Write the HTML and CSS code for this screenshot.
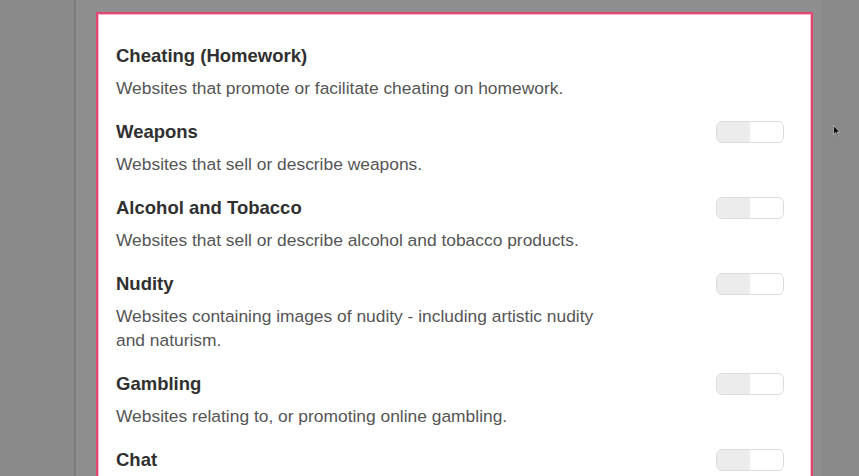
FILE: index.html
```html
<!DOCTYPE html>
<html>
<head>
<meta charset="utf-8">
<link rel="stylesheet" href="styles.css">
</head>
<body>
<div class="page">
  <div class="card">
    <div class="item">
      <div class="head"><span class="title">Cheating (Homework)</span></div>
      <p class="desc">Websites that promote or facilitate cheating on homework.</p>
    </div>
    <div class="item">
      <div class="head"><span class="title">Weapons</span><span class="toggle"><span class="knob"></span></span></div>
      <p class="desc">Websites that sell or describe weapons.</p>
    </div>
    <div class="item">
      <div class="head"><span class="title">Alcohol and Tobacco</span><span class="toggle"><span class="knob"></span></span></div>
      <p class="desc">Websites that sell or describe alcohol and tobacco products.</p>
    </div>
    <div class="item">
      <div class="head"><span class="title">Nudity</span><span class="toggle"><span class="knob"></span></span></div>
      <p class="desc">Websites containing images of nudity - including artistic nudity and naturism.</p>
    </div>
    <div class="item">
      <div class="head"><span class="title">Gambling</span><span class="toggle"><span class="knob"></span></span></div>
      <p class="desc">Websites relating to, or promoting online gambling.</p>
    </div>
    <div class="item">
      <div class="head"><span class="title">Chat</span><span class="toggle"><span class="knob"></span></span></div>
    </div>
  </div>
</div>
<svg class="cursor" width="8" height="12" viewBox="0 0 8 12"><path d="M0.5 0.5 L0.5 9.5 L2.6 7.6 L4.2 11.2 L5.4 10.6 L3.9 7.1 L6.8 7.1 Z" fill="#111" stroke="#ddd" stroke-width="0.6"/></svg>
</body>
</html>
```

FILE: styles.css
```css
html, body {
  margin: 0;
  height: 476px;
  overflow: hidden;
}
body {
  background: #8a8a8a;
  font-family: "Liberation Sans", Arial, Helvetica, sans-serif;
  position: relative;
}
.page {
  margin-left: 74px;
  width: 748px;
  height: 476px;
  box-sizing: border-box;
  border-left: 2px solid #7c7c7c;
  background: #8e8e8e;
  padding: 12px 0 0 20px;
}
.card {
  width: 717px;
  height: 470px;
  box-sizing: border-box;
  border: 2px solid #e2456f;
  border-bottom: none;
  box-shadow: inset 0 0 0 1px #f7b9c9;
  background: #fff;
  padding: 30px 27px 0 18px;
}
.item {
  margin-bottom: 20px;
}
.head {
  display: flex;
  justify-content: space-between;
  align-items: center;
  height: 24px;
}
.title {
  font-size: 18.5px;
  font-weight: bold;
  color: #303030;
  line-height: 24px;
}
.desc {
  margin: 8px 0 0 0;
  font-size: 17.4px;
  line-height: 24px;
  color: #555;
  max-width: 490px;
}
.toggle {
  width: 68px;
  height: 22px;
  box-sizing: border-box;
  border: 1.5px solid #dcdcdc;
  border-radius: 6px;
  background: #fff;
  display: flex;
  overflow: hidden;
}
.knob {
  width: 33px;
  height: 100%;
  background: #ececec;
}
.cursor {
  position: absolute;
  left: 833px;
  top: 125px;
}
```
